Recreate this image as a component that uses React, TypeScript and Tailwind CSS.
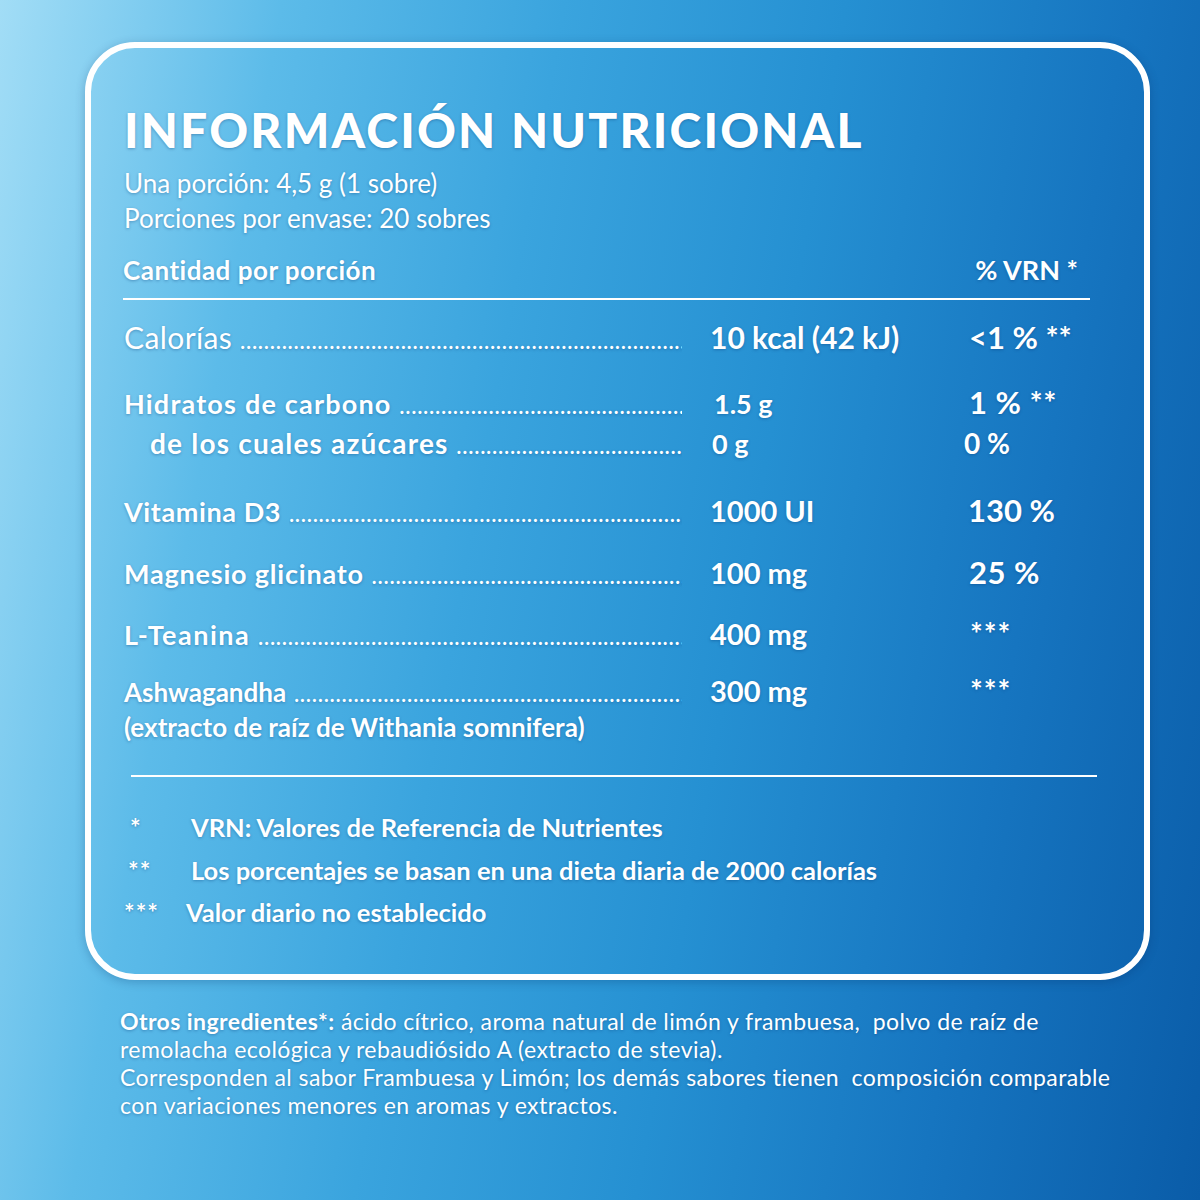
import React from "react";

const DOTS = ".".repeat(220);

function Leader() {
  return (
    <span className="ml-2 flex-1 overflow-hidden whitespace-nowrap text-[20px] font-bold tracking-[1.2px]">
      {DOTS}
    </span>
  );
}

type RowProps = {
  label: React.ReactNode;
  labelClass: string;
  value: string;
  valueClass: string;
  vrn: string;
  vrnClass: string;
  mt: string;
  indent?: string;
};

function Row({ label, labelClass, value, valueClass, vrn, vrnClass, mt, indent = "" }: RowProps) {
  return (
    <div className={`flex h-[36px] items-baseline leading-[36px] ${mt}`}>
      <div className={`flex w-[558px] items-baseline ${indent}`}>
        <span className={`whitespace-nowrap ${labelClass}`}>{label}</span>
        <Leader />
      </div>
      <div className={`ml-[28px] w-[258px] whitespace-nowrap ${valueClass}`}>{value}</div>
      <div className={`whitespace-nowrap ${vrnClass}`}>{vrn}</div>
    </div>
  );
}

export default function App() {
  return (
    <div
      className="relative h-[1200px] w-[1200px] overflow-hidden bg-[linear-gradient(100deg,#a2ddf6_0%,#5cbbe9_20%,#3aa4de_40%,#2590d2_60%,#1675c0_80%,#0a5ca8_100%)] text-white [text-shadow:0_1px_3px_rgba(0,50,110,0.35)]"
      style={{ fontFamily: "Lato, 'Open Sans', sans-serif" }}
    >
      <div className="pt-[42px] pl-[85px]">
        <div className="h-[938px] w-[1065px] rounded-[50px] border-[6px] border-white pl-[33px] pt-[53px] shadow-[0_2px_10px_rgba(0,40,90,0.25)]">
          <h1 className="text-[48px] leading-[58px] font-black tracking-[2.2px] whitespace-nowrap">
            INFORMACIÓN NUTRICIONAL
          </h1>
          <div className="mt-[7px] text-[26px] leading-[35px]">
            <div>Una porción: 4,5 g (1 sobre)</div>
            <div>Porciones por envase: 20 sobres</div>
          </div>
          <div className="mt-[19px] flex h-[30px] w-[966px] items-baseline text-[26px] leading-[30px] font-bold tracking-[0.5px]">
            <span className="-ml-[1px]">Cantidad por porción</span>
            <span className="ml-auto mr-[12px] text-[27px] tracking-[0px]">% VRN *</span>
          </div>
          <div className="mt-[13px] h-[2px] w-[967px] -ml-[1px] bg-white" />

          <Row
            mt="mt-[19px]"
            label="Calorías"
            labelClass="text-[30px] font-normal tracking-[0.4px]"
            value="10 kcal (42 kJ)"
            valueClass="text-[30px] font-bold"
            vrn="<1 % **"
            vrnClass="text-[31px] font-bold pl-[1px]"
          />
          <Row
            mt="mt-[29px]"
            label="Hidratos de carbono"
            labelClass="text-[27px] font-bold tracking-[1.2px]"
            value="1.5 g"
            valueClass="text-[27px] font-bold pl-[4px]"
            vrn="1 % **"
            vrnClass="text-[31px] font-bold pl-[1px] tracking-[0.5px]"
          />
          <Row
            mt="mt-[5px]"
            indent="pl-[26px]"
            label="de los cuales azúcares"
            labelClass="text-[28px] font-bold tracking-[1.2px]"
            value="0 g"
            valueClass="text-[27px] font-bold pl-[2px]"
            vrn="0 %"
            vrnClass="text-[28px] font-bold -ml-[4px]"
          />
          <Row
            mt="mt-[31px]"
            label="Vitamina D3"
            labelClass="text-[27px] font-bold tracking-[0.6px]"
            value="1000 UI"
            valueClass="text-[29px] font-bold -ml-[1px]"
            vrn="130 %"
            vrnClass="text-[31px] font-bold"
          />
          <Row
            mt="mt-[26px]"
            label="Magnesio glicinato"
            labelClass="text-[27px] font-bold tracking-[0.8px]"
            value="100 mg"
            valueClass="text-[29px] font-bold"
            vrn="25 %"
            vrnClass="text-[31px] font-bold pl-[1px] tracking-[0.5px]"
          />
          <Row
            mt="mt-[25px]"
            label="L-Teanina"
            labelClass="text-[27px] font-bold tracking-[1.5px]"
            value="400 mg"
            valueClass="text-[29px] font-bold -ml-[1px]"
            vrn="***"
            vrnClass="text-[30px] font-bold pl-[2px] tracking-[1px]"
          />
          <Row
            mt="mt-[21px]"
            label="Ashwagandha"
            labelClass="text-[26px] font-bold"
            value="300 mg"
            valueClass="text-[29px] font-bold -ml-[1px]"
            vrn="***"
            vrnClass="text-[30px] font-bold pl-[2px] tracking-[1px]"
          />
          <div className="mt-[2px] h-[34px] text-[26px] leading-[34px] font-bold">
            (extracto de raíz de Withania somnifera)
          </div>

          <div className="mt-[31px] ml-[7px] h-[2px] w-[966px] bg-white" />

          <div className="mt-[33px] flex h-[34px] items-baseline text-[25.5px] leading-[34px] font-bold">
            <span className="w-[67px] pl-[6px] text-[25px]">*</span>
            <span>VRN: Valores de Referencia de Nutrientes</span>
          </div>
          <div className="mt-[9px] flex h-[34px] items-baseline text-[25.5px] leading-[34px] font-bold">
            <span className="w-[67px] pl-[4px] text-[25px] tracking-[1px]">**</span>
            <span>Los porcentajes se basan en una dieta diaria de 2000 calorías</span>
          </div>
          <div className="mt-[8px] flex h-[34px] items-baseline text-[25.5px] leading-[34px] font-bold">
            <span className="w-[62px] text-[25px] tracking-[1px]">***</span>
            <span>Valor diario no establecido</span>
          </div>
        </div>
      </div>

      <div className="mt-[27px] pl-[120px] text-[23px] leading-[28px] tracking-[0.42px] whitespace-nowrap">
        <div>
          <span className="font-bold">Otros ingredientes*:</span> ácido cítrico, aroma natural de limón y frambuesa,&nbsp; polvo de raíz de
        </div>
        <div>remolacha ecológica y rebaudiósido A (extracto de stevia).</div>
        <div>Corresponden al sabor Frambuesa y Limón; los demás sabores tienen&nbsp; composición comparable</div>
        <div>con variaciones menores en aromas y extractos.</div>
      </div>
    </div>
  );
}
